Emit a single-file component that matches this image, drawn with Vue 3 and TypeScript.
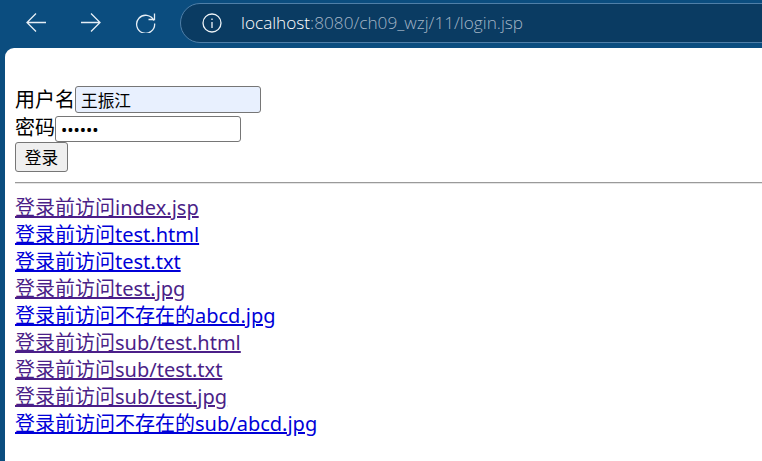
<script setup lang="ts">
type LinkItem = { label: string; visited: boolean };

const links: LinkItem[] = [
  { label: '登录前访问index.jsp', visited: true },
  { label: '登录前访问test.html', visited: false },
  { label: '登录前访问test.txt', visited: false },
  { label: '登录前访问test.jpg', visited: true },
  { label: '登录前访问不存在的abcd.jpg', visited: false },
  { label: '登录前访问sub/test.html', visited: true },
  { label: '登录前访问sub/test.txt', visited: true },
  { label: '登录前访问sub/test.jpg', visited: true },
  { label: '登录前访问不存在的sub/abcd.jpg', visited: false },
];
</script>

<template>
  <div class="window">
    <header class="toolbar">
      <button class="nav-btn" aria-label="back">
        <svg width="20" height="19" viewBox="0 0 20 19">
          <path d="M20 9.500H1M10 .5 1 9.500l9 9" />
        </svg>
      </button>
      <button class="nav-btn" aria-label="forward">
        <svg width="20" height="19" viewBox="0 0 20 19">
          <path d="M0 9.500h19M10 .5l9 9-9 9" />
        </svg>
      </button>
      <button class="nav-btn" aria-label="reload">
        <svg width="21" height="21" viewBox="0 0 21 21">
          <path d="M18.800 8.500A9 9 0 1 0 19.600 11.500" />
          <path d="M13.500 7.500h6V1.500" />
        </svg>
      </button>
      <div class="address">
        <svg class="info" width="20" height="20" viewBox="0 0 20 20">
          <circle cx="10" cy="10" r="9" />
          <path d="M10 9v6M10 5.500v1.500" />
        </svg>
        <span class="host">localhost</span><span class="path">:8080/ch09_wzj/11/login.jsp</span>
      </div>
    </header>

    <main class="page">
      <form class="login" @submit.prevent>
        <div class="row">
          <label>用户名</label><input class="field field--filled" type="text" value="王振江" />
        </div>
        <div class="row">
          <label>密码</label><input class="field" type="password" value="123456" />
        </div>
        <div class="row">
          <button class="submit" type="button">登录</button>
        </div>
      </form>
      <hr class="rule" />
      <nav class="links">
        <a
          v-for="link in links"
          :key="link.label"
          href="#"
          :class="{ visited: link.visited }"
          @click.prevent
        >{{ link.label }}</a>
      </nav>
    </main>
  </div>
</template>

<style>
html,
body {
  margin: 0;
  overflow: hidden;
}
</style>

<style scoped>
.window {
  width: 762px;
  height: 461px;
  display: flex;
  flex-direction: column;
  background: #0b4d7f;
  overflow: hidden;
  font-family: "Noto Sans", "Noto Sans CJK SC", sans-serif;
}

.toolbar {
  height: 48px;
  flex: none;
  display: flex;
  align-items: center;
  padding: 0 0 3px 0;
  box-sizing: border-box;
}

.nav-btn {
  width: 55px;
  height: 40px;
  flex: none;
  display: flex;
  align-items: center;
  justify-content: center;
  padding: 0;
  border: 0;
  background: none;
}

.nav-btn:first-child {
  margin-left: 8px;
}

.nav-btn svg {
  fill: none;
  stroke: #e6eef5;
  stroke-width: 1.3;
}

.address {
  flex: none;
  width: 640px;
  height: 40px;
  margin-left: 7px;
  box-sizing: border-box;
  display: flex;
  align-items: center;
  padding-left: 21px;
  background: #0a3b62;
  border: 1px solid #4f7fa8;
  border-radius: 20px 0 0 20px;
  font-family: "Open Sans", sans-serif;
  font-size: 17.2px;
  font-weight: 300;
}

.info {
  margin-right: 19px;
  fill: none;
  stroke: #eef3f7;
  stroke-width: 1.3;
}

.host {
  color: #ffffff;
}

.path {
  color: #a3b5c6;
}

.page {
  flex: 1;
  margin-left: 5px;
  padding: 38px 0 0 10px;
  background: #ffffff;
  border-top-left-radius: 9px;
  color: #000000;
  font-size: 20px;
  line-height: 27px;
}

.row {
  display: flex;
  align-items: flex-start;
}

.row:nth-child(1) {
  height: 30px;
}

.row:nth-child(2) {
  height: 26px;
}

.row:nth-child(2) label {
  margin-top: -2px;
}

.row:nth-child(3) {
  height: 30px;
}

.field {
  width: 186px;
  height: 27px;
  box-sizing: border-box;
  padding: 1px 5px;
  border: 1px solid #767676;
  border-radius: 3px;
  background: #ffffff;
  font-family: inherit;
  font-size: 16.67px;
  color: #000000;
}

.field--filled {
  background: #e8f0fe;
}

.row:nth-child(2) .field {
  height: 26px;
}

.submit {
  width: 53px;
  height: 30px;
  padding: 0;
  border: 1px solid #767676;
  border-radius: 3px;
  background: #efefef;
  font-family: inherit;
  font-size: 16.67px;
  color: #000000;
}

.rule {
  height: 0;
  margin: 10px 0 10px;
  border: 0;
  border-top: 1px solid #9a9a9a;
  border-bottom: 1px solid #e4e4e4;
}

.links {
  display: flex;
  flex-direction: column;
  align-items: flex-start;
}

.links a {
  color: #0000d8;
  text-decoration: underline;
}

.links a.visited {
  color: #4b1f88;
}
</style>
